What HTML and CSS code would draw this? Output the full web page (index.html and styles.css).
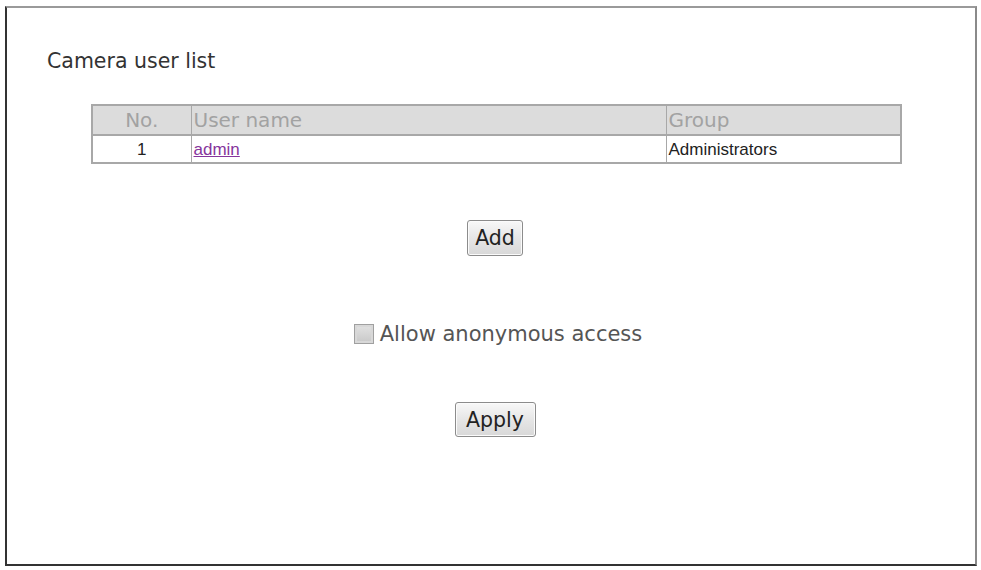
FILE: index.html
```html
<!DOCTYPE html>
<html>
<head>
<meta charset="utf-8">
<title>Camera user list</title>
<link rel="stylesheet" href="styles.css">
</head>
<body>
<div class="frame">
  <h1 class="title">Camera user list</h1>
  <table class="users">
    <colgroup>
      <col class="c-no">
      <col class="c-name">
      <col class="c-group">
    </colgroup>
    <thead>
      <tr><th class="no">No.</th><th>User name</th><th>Group</th></tr>
    </thead>
    <tbody>
      <tr><td class="no">1</td><td><a href="#" class="user-link">admin</a></td><td>Administrators</td></tr>
    </tbody>
  </table>
  <div class="actions">
    <button class="btn btn-add" type="button">Add</button>
    <label class="anon"><input type="checkbox" class="check"><span>Allow anonymous access</span></label>
    <button class="btn btn-apply" type="button">Apply</button>
  </div>
</div>
</body>
</html>
```
FILE: styles.css
```css
html, body {
  margin: 0;
  padding: 0;
  background: #ffffff;
}
body {
  font-family: "DejaVu Sans", Verdana, sans-serif;
}
.frame {
  box-sizing: border-box;
  margin: 6px 0 0 5px;
  width: 972px;
  height: 560px;
  border-top: 2px solid #9a9a9a;
  border-left: 2px solid #333333;
  border-right: 2px solid #8a8a8a;
  border-bottom: 2px solid #333333;
  box-shadow: 0 1px 0 #b0b0b0;
  padding-top: 41px;
}
.title {
  margin: 0 0 0 40px;
  font-size: 20.5px;
  font-weight: normal;
  line-height: 24px;
  color: #333333;
}
.users {
  margin: 31px 0 0 84px;
  width: 809px;
  border-collapse: collapse;
  table-layout: fixed;
  border: 2px solid #a8a8a8;
}
.c-no { width: 99px; }
.c-name { width: 475px; }
.c-group { width: 235px; }
.users th {
  height: 28px;
  padding: 0 0 0 2px;
  background: #dcdcdc;
  border: 1px solid #a8a8a8;
  border-bottom-width: 2px;
  font-weight: normal;
  font-size: 20px;
  color: #a2a2a2;
  text-align: left;
  line-height: 24px;
}
.users td {
  height: 24px;
  padding: 2px 0 0 2px;
  border: 1px solid #a8a8a8;
  font-family: "Liberation Sans", Arial, sans-serif;
  font-size: 17px;
  color: #222222;
  line-height: 20px;
}
.users .no {
  text-align: center;
  padding-left: 0;
}
.user-link {
  color: #86349c;
  text-decoration: underline;
}
.actions {
  display: flex;
  flex-direction: column;
  align-items: center;
  padding-left: 8px;
}
.btn {
  box-sizing: border-box;
  font-family: "DejaVu Sans", Verdana, sans-serif;
  font-size: 20.5px;
  color: #222222;
  background: linear-gradient(#f8f8f8, #e6e6e6 50%, #d8d8d8);
  border: 1px solid #8c8c8c;
  border-radius: 3px;
  box-shadow: inset 0 0 0 1px #fbfbfb;
  padding: 0;
  line-height: 24px;
}
.btn-add {
  margin-top: 56px;
  width: 56px;
  height: 36px;
}
.btn-apply {
  margin-top: 56px;
  width: 81px;
  height: 35px;
}
.anon {
  margin-top: 66px;
  display: flex;
  align-items: center;
  gap: 6px;
  padding-left: 6px;
  font-size: 21px;
  line-height: 24px;
  color: #555555;
}
.check {
  appearance: none;
  -webkit-appearance: none;
  margin: 0;
  width: 20px;
  height: 20px;
  box-sizing: border-box;
  border: 1px solid #a0a0a0;
  background: linear-gradient(#e2e2e2, #c8c8c8);
  box-shadow: inset 0 0 0 2px #d8d8d8;
}
```
